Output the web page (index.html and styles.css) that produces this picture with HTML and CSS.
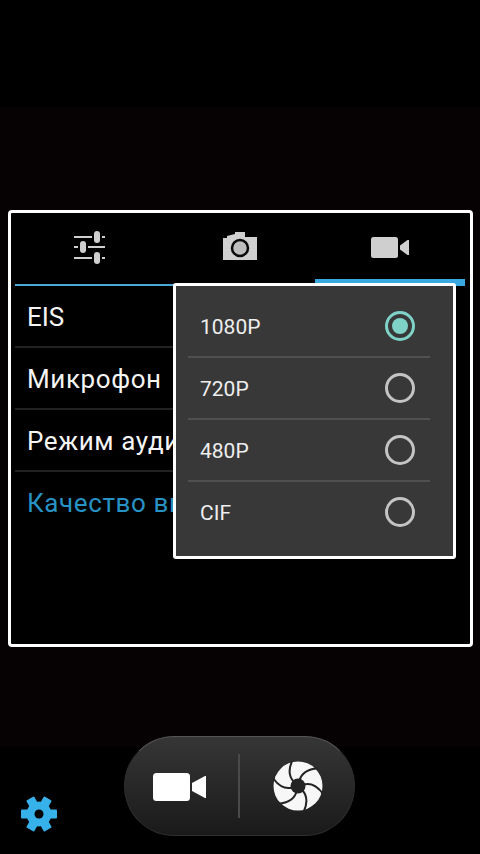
FILE: index.html
```html
<!DOCTYPE html>
<html lang="ru">
<head>
    <meta charset="UTF-8">
    <meta name="viewport" content="width=device-width, initial-scale=1.0">
    <title>Камера</title>
    <link rel="stylesheet" href="styles.css">
</head>
<body>
    <div class="preview">
        <div class="settings">
            <div class="tabs">
                <div class="tab">
                    <svg width="36" height="34" viewBox="0 0 36 34">
                        <g fill="#cfcfcf">
                            <rect x="2" y="5" width="31" height="2"/>
                            <rect x="2" y="15" width="31" height="2"/>
                            <rect x="2" y="26" width="31" height="2"/>
                        </g>
                        <g fill="#000">
                            <rect x="20" y="1" width="10" height="11"/>
                            <rect x="6" y="11" width="10" height="11"/>
                            <rect x="20" y="22" width="10" height="11"/>
                        </g>
                        <g fill="#cfcfcf">
                            <rect x="22" y="0" width="6" height="12" rx="3"/>
                            <rect x="8" y="10" width="6" height="12" rx="3"/>
                            <rect x="22" y="21" width="6" height="12" rx="3"/>
                        </g>
                    </svg>
                </div>
                <div class="tab">
                    <svg width="36" height="30" viewBox="0 0 36 30">
                        <path fill="#cfcfcf" d="M1 7h4V5l8-2V1h10v5h12v23H1z"/>
                        <circle cx="18" cy="17" r="8" fill="#bdbdbd" stroke="#0a0a0a" stroke-width="2.500"/>
                    </svg>
                </div>
                <div class="tab tab-active">
                    <svg width="38" height="22" viewBox="0 0 38 22">
                        <rect x="0" y="0" width="27" height="21" rx="2.500" fill="#cfcfcf"/>
                        <path fill="#cfcfcf" d="M29 8.500L36.500 3H38V18H36.500L29 12.500z"/>
                    </svg>
                </div>
            </div>
            <div class="pref-list">
                <div class="pref-row pref-latin">EIS</div>
                <div class="pref-row">Микрофон</div>
                <div class="pref-row">Режим аудио</div>
                <div class="pref-row pref-selected">Качество видео</div>
            </div>
            <div class="popup">
                <div class="option">
                    <span class="option-label">1080P</span>
                    <span class="radio radio-on"><span class="radio-dot"></span></span>
                </div>
                <div class="option">
                    <span class="option-label">720P</span>
                    <span class="radio"></span>
                </div>
                <div class="option">
                    <span class="option-label">480P</span>
                    <span class="radio"></span>
                </div>
                <div class="option">
                    <span class="option-label">CIF</span>
                    <span class="radio"></span>
                </div>
            </div>
        </div>
    </div>

    <div class="gear">
        <svg width="36" height="36" viewBox="0 0 36 36">
            <g fill="#37b1ea" transform="rotate(30 18 18)">
                <circle cx="18" cy="18" r="12.500"/>
                <rect id="tooth" x="13.500" y="0" width="9" height="10" rx="1"/>
                <use href="#tooth" transform="rotate(60 18 18)"/>
                <use href="#tooth" transform="rotate(120 18 18)"/>
                <use href="#tooth" transform="rotate(180 18 18)"/>
                <use href="#tooth" transform="rotate(240 18 18)"/>
                <use href="#tooth" transform="rotate(300 18 18)"/>
            </g>
            <circle cx="18" cy="18" r="4.500" fill="#000"/>
        </svg>
    </div>

    <div class="capture">
        <div class="capture-half capture-video">
            <svg width="53" height="29" viewBox="0 0 53 29">
                <rect x="0" y="1" width="37" height="28" rx="3.500" fill="#fff"/>
                <path fill="#fff" d="M39 11L52 4H53V26H52L39 19z"/>
            </svg>
        </div>
        <div class="capture-line"></div>
        <div class="capture-half capture-photo">
            <svg width="50" height="50" viewBox="0 0 50 50">
                <circle cx="25" cy="25" r="24.500" fill="#f7f7f7"/>
                <g fill="none" stroke="#232323" stroke-width="2">
                    <path id="blade" d="M19.500 -1Q13 13 21 21"/>
                    <use href="#blade" transform="rotate(60 25 25)"/>
                    <use href="#blade" transform="rotate(120 25 25)"/>
                    <use href="#blade" transform="rotate(180 25 25)"/>
                    <use href="#blade" transform="rotate(240 25 25)"/>
                    <use href="#blade" transform="rotate(300 25 25)"/>
                </g>
                <circle cx="25" cy="25" r="7.500" fill="#232323"/>
            </svg>
        </div>
    </div>
</body>
</html>
```

FILE: styles.css
```css
html, body {
    margin: 0;
    padding: 0;
}
body {
    width: 480px;
    height: 854px;
    background: #000;
    font-family: Roboto, "Noto Sans", sans-serif;
    position: relative;
    overflow: hidden;
}
.preview {
    margin-top: 107px;
    height: 640px;
    padding: 103px 7px 0 8px;
    box-sizing: border-box;
    background: #060102;
}
.settings {
    position: relative;
    height: 437px;
    box-sizing: border-box;
    padding: 0 5px 0 4px;
    border: 3px solid #fff;
    border-radius: 4px;
    background: #000;
}
.tabs {
    display: flex;
    height: 71px;
    border-bottom: 2px solid #4aa8d8;
}
.tab {
    flex: 1;
    display: flex;
    justify-content: center;
    padding-top: 18px;
    box-sizing: border-box;
    height: 71px;
}
.tab-active {
    height: 73px;
    border-bottom: 7px solid #38a9e0;
    padding-top: 24px;
}
.pref-list {
    width: 158px;
    overflow: hidden;
}
.pref-row {
    height: 60px;
    line-height: 62px;
    padding-left: 12px;
    font-size: 26px;
    letter-spacing: 0.6px;
    white-space: nowrap;
    overflow: hidden;
    color: #f4f4f4;
    border-bottom: 2px solid #222;
}
.pref-latin {
    letter-spacing: 0;
}
.pref-row:last-child {
    border-bottom: none;
}
.pref-selected {
    color: #2792c4;
}
.popup {
    position: absolute;
    left: 162px;
    top: 70px;
    width: 283px;
    height: 276px;
    box-sizing: border-box;
    padding: 10px 23px 0 12px;
    background: #383838;
    border: 3px solid #fff;
    border-radius: 3px;
}
.option {
    display: flex;
    align-items: center;
    justify-content: space-between;
    height: 60px;
    padding: 0 15px 0 12px;
    border-bottom: 2px solid #505050;
    font-size: 21px;
    color: #eee;
}
.option:last-child {
    border-bottom: none;
}
.option-label {
    padding-top: 2px;
}
.radio {
    display: flex;
    align-items: center;
    justify-content: center;
    width: 30px;
    height: 30px;
    box-sizing: border-box;
    border: 3px solid #c4c4c4;
    border-radius: 50%;
}
.radio-on {
    border-color: #7fd2c8;
}
.radio-dot {
    width: 16px;
    height: 16px;
    border-radius: 50%;
    background: #7fd2c8;
}
.gear {
    position: absolute;
    left: 21px;
    top: 796px;
    width: 36px;
    height: 36px;
}
.capture {
    position: absolute;
    left: 124px;
    top: 736px;
    width: 231px;
    height: 100px;
    box-sizing: border-box;
    display: flex;
    align-items: center;
    border-radius: 50px;
    border: 1px solid #2e2e2e;
    border-top-color: #555;
    background: linear-gradient(#363636, #1a1a1a);
}
.capture-half {
    display: flex;
    justify-content: center;
    box-sizing: border-box;
}
.capture-video {
    width: 113px;
    padding-right: 4px;
}
.capture-photo {
    flex: 1;
    padding-left: 2px;
}
.capture-line {
    width: 2px;
    height: 64px;
    background: #4a4a4a;
}
```
